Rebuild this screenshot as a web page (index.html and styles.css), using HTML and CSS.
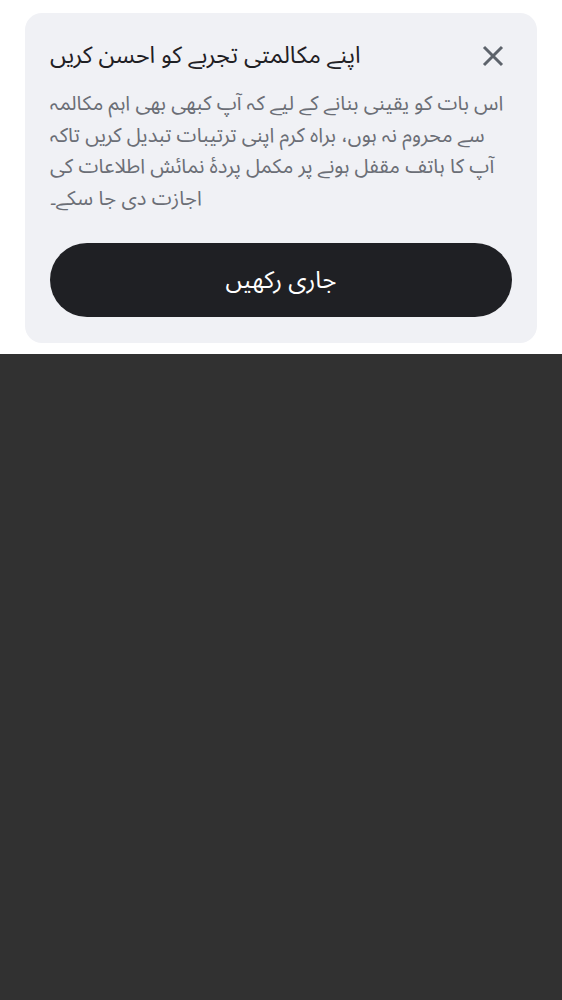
FILE: index.html
```html
<!DOCTYPE html>
<html lang="ur">
<head>
<meta charset="utf-8">
<link rel="stylesheet" href="styles.css">
</head>
<body>
<div class="top">
  <div class="card">
    <div class="head">
      <h1 class="title">اپنے مکالمتی تجربے کو احسن کریں</h1>
      <button class="close" aria-label="close">
        <svg width="22" height="22" viewBox="0 0 22 22"><path d="M2 2 L20 20 M20 2 L2 20" stroke="#5d636b" stroke-width="3" fill="none"/></svg>
      </button>
    </div>
    <p class="body">اس بات کو یقینی بنانے کے لیے کہ آپ کبھی بھی اہم مکالمہ سے محروم نہ ہوں، براہ کرم اپنی ترتیبات تبدیل کریں تاکہ آپ کا ہاتف مقفل ہونے پر مکمل پردۂ نمائش اطلاعات کی اجازت دی جا سکے۔</p>
    <button class="cta">جاری رکھیں</button>
  </div>
</div>
<div class="shade"></div>
</body>
</html>
```
FILE: styles.css
```css
html, body {
  margin: 0;
  padding: 0;
  height: 100%;
}
body {
  font-family: "Noto Sans Arabic", "DejaVu Sans", sans-serif;
  display: flex;
  flex-direction: column;
  background: #fff;
}
.top {
  padding: 13px 25px 11px 25px;
  background: #fff;
}
.card {
  background: #f0f1f5;
  border-radius: 17px;
  padding: 25px 25px 26px 25px;
}
.head {
  display: flex;
  align-items: center;
  justify-content: space-between;
}
.title {
  margin: 0;
  font-size: 23.5px;
  font-weight: normal;
  color: #1f2024;
  line-height: 36px;
}
.close {
  border: 0;
  background: none;
  padding: 0;
  margin-right: 8px;
  width: 22px;
  height: 22px;
  display: flex;
}
.body {
  margin: 14px 0 0 0;
  font-size: 20.2px;
  line-height: 31.5px;
  color: #6b6e76;
}
.cta {
  display: block;
  width: 100%;
  height: 74px;
  margin-top: 29px;
  border: 0;
  border-radius: 37px;
  background: #1f2024;
  color: #fff;
  font-family: "Noto Sans Arabic", "DejaVu Sans", sans-serif;
  font-size: 24px;
}
.shade {
  flex: 1;
  background: #313131;
}
```
